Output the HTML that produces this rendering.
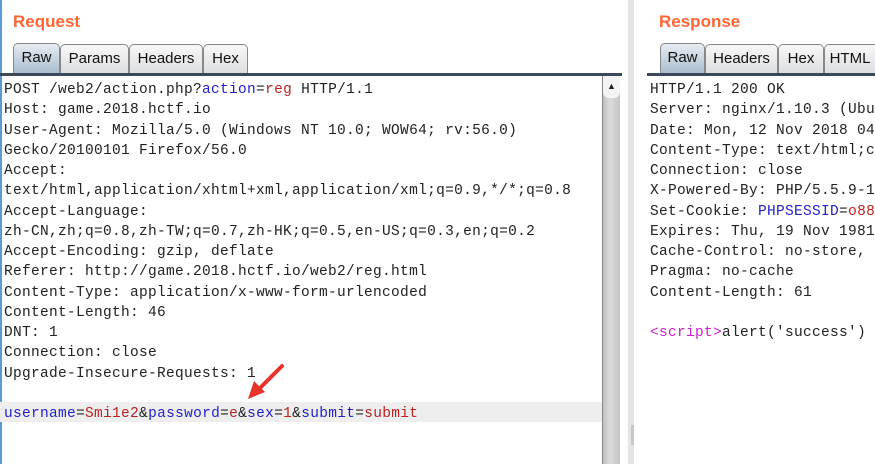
<!DOCTYPE html>
<html><head><style>
*{margin:0;padding:0;box-sizing:border-box}
html,body{width:875px;height:464px;overflow:hidden}
body{background:#fff;position:relative;font-family:"Liberation Sans",sans-serif}
.title{position:absolute;top:12px;font-weight:bold;font-size:17px;color:#ff6633}
.tab{position:absolute;top:44px;height:30px;border:1px solid #888;border-bottom:none;border-radius:5px 5px 0 0;background:linear-gradient(#f8f8f8,#dcdde0);font-size:15px;color:#111;text-align:center;line-height:28px;overflow:hidden;white-space:nowrap}
.tab.act{background:linear-gradient(#e6ecf2,#a9bccd);top:43px;height:31px}
.bar{position:absolute;top:73px;height:3px;background:#3a4a5c}
.code{position:absolute;top:80px;font-family:"Liberation Mono",monospace;font-size:14.5px;line-height:20.25px;color:#222;white-space:pre;letter-spacing:0.3px}
.b{color:#2222cc}.r{color:#bb2222}.m{color:#cc22cc}
#right{position:absolute;left:0;top:0;width:875px;height:464px;overflow:hidden}
</style></head><body>
<div style="position:absolute;left:0;top:0;width:2px;height:464px;background:#5b9bd5"></div>
<div class="title" style="left:13px">Request</div>
<div class="tab act" style="left:13px;width:47px">Raw</div>
<div class="tab" style="left:60px;width:69px">Params</div>
<div class="tab" style="left:129px;width:74px">Headers</div>
<div class="tab" style="left:203px;width:45px">Hex</div>
<div class="bar" style="left:0;width:622px"></div>
<div style="position:absolute;left:0;top:402px;width:602px;height:20px;background:#eeeeee"></div>
<div class="code" style="left:4px">POST /web2/action.php?<span class="b">action</span>=<span class="r">reg</span> HTTP/1.1
Host: game.2018.hctf.io
User-Agent: Mozilla/5.0 (Windows NT 10.0; WOW64; rv:56.0)
Gecko/20100101 Firefox/56.0
Accept:
text/html,application/xhtml+xml,application/xml;q=0.9,*/*;q=0.8
Accept-Language:
zh-CN,zh;q=0.8,zh-TW;q=0.7,zh-HK;q=0.5,en-US;q=0.3,en;q=0.2
Accept-Encoding: gzip, deflate
Referer: http://game.2018.hctf.io/web2/reg.html
Content-Type: application/x-www-form-urlencoded
Content-Length: 46
DNT: 1
Connection: close
Upgrade-Insecure-Requests: 1

<span class="b">username</span>=<span class="r">Smi1e2</span>&amp;<span class="b">password</span>=<span class="r">e</span>&amp;<span class="b">sex</span>=<span class="r">1</span>&amp;<span class="b">submit</span>=<span class="r">submit</span></div>
<div style="position:absolute;left:602px;top:76px;width:1px;height:388px;background:#888"></div>
<div style="position:absolute;left:603px;top:76px;width:17px;height:388px;background:linear-gradient(90deg,#bfbfbf,#dcdcdc 40%,#c4c4c4)"></div>
<div style="position:absolute;left:603px;top:76px;width:17px;height:22px;background:#f4f4f4;border-radius:0 0 6px 6px;font-size:9px;text-align:center;line-height:20px;color:#222">▲</div>
<div style="position:absolute;left:628px;top:0;width:6px;height:464px;background:#e4e4e4"></div>
<div style="position:absolute;left:631px;top:425px;width:3px;height:20px;background:#c8c8c8"></div>
<div id="right">
<div class="title" style="left:659px">Response</div>
<div class="tab act" style="left:660px;width:45px">Raw</div>
<div class="tab" style="left:705px;width:73px">Headers</div>
<div class="tab" style="left:778px;width:46px">Hex</div>
<div class="tab" style="left:824px;width:51px;border-right:none;border-radius:5px 0 0 0">HTML</div>
<div class="bar" style="left:647px;width:228px"></div>
<div class="code" style="left:650px;width:225px;overflow:hidden">HTTP/1.1 200 OK
Server: nginx/1.10.3 (Ubuntu)
Date: Mon, 12 Nov 2018 04:
Content-Type: text/html;charset
Connection: close
X-Powered-By: PHP/5.5.9-1
Set-Cookie: <span class="b">PHPSESSID</span>=<span class="r">o88</span>
Expires: Thu, 19 Nov 1981
Cache-Control: no-store,
Pragma: no-cache
Content-Length: 61

<span class="m">&lt;script&gt;</span>alert('success')</div>
</div>
<svg style="position:absolute;left:0;top:0" width="875" height="464">
<path d="M282 366 L258 390" stroke="#e8332a" stroke-width="4" stroke-linecap="round"/>
<path d="M248 399 L254 381 L265 392 Z" fill="#e8332a"/>
</svg>
</body></html>
